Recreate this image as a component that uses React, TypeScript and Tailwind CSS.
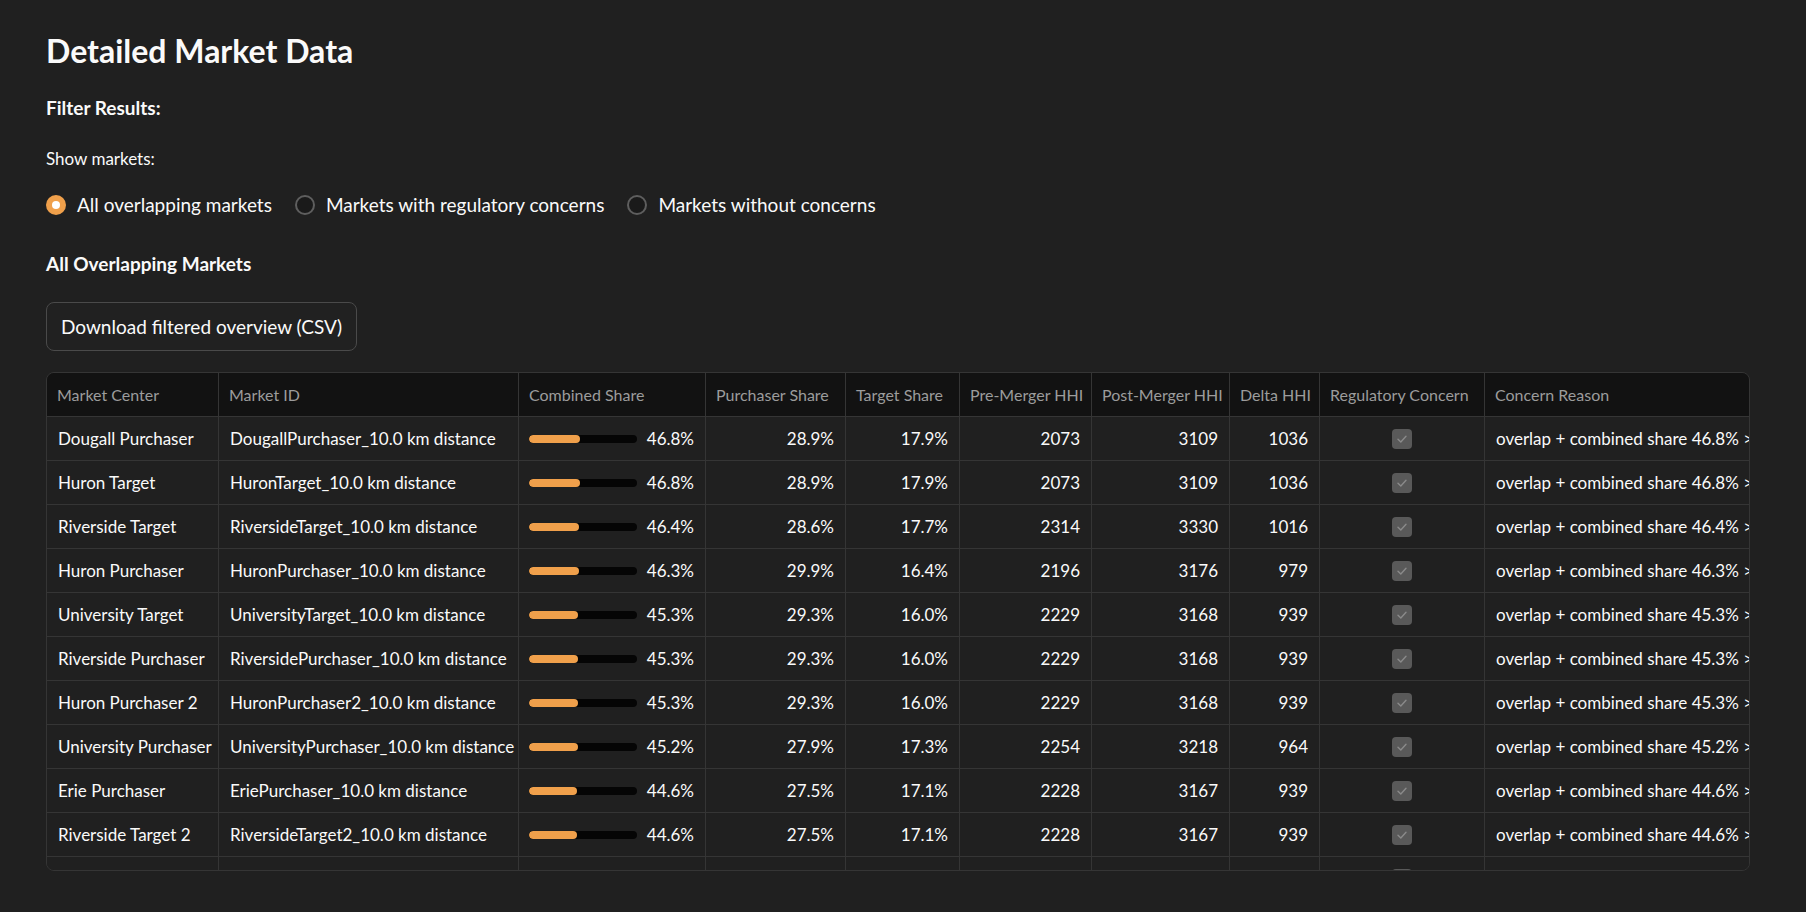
import React from "react";

type Row = {
  center: string;
  id: string;
  combined: number;
  purchaser: number;
  target: number;
  pre: number;
  post: number;
  delta: number;
};

const rows: Row[] = [
  { center: "Dougall Purchaser", id: "DougallPurchaser_10.0 km distance", combined: 46.8, purchaser: 28.9, target: 17.9, pre: 2073, post: 3109, delta: 1036 },
  { center: "Huron Target", id: "HuronTarget_10.0 km distance", combined: 46.8, purchaser: 28.9, target: 17.9, pre: 2073, post: 3109, delta: 1036 },
  { center: "Riverside Target", id: "RiversideTarget_10.0 km distance", combined: 46.4, purchaser: 28.6, target: 17.7, pre: 2314, post: 3330, delta: 1016 },
  { center: "Huron Purchaser", id: "HuronPurchaser_10.0 km distance", combined: 46.3, purchaser: 29.9, target: 16.4, pre: 2196, post: 3176, delta: 979 },
  { center: "University Target", id: "UniversityTarget_10.0 km distance", combined: 45.3, purchaser: 29.3, target: 16.0, pre: 2229, post: 3168, delta: 939 },
  { center: "Riverside Purchaser", id: "RiversidePurchaser_10.0 km distance", combined: 45.3, purchaser: 29.3, target: 16.0, pre: 2229, post: 3168, delta: 939 },
  { center: "Huron Purchaser 2", id: "HuronPurchaser2_10.0 km distance", combined: 45.3, purchaser: 29.3, target: 16.0, pre: 2229, post: 3168, delta: 939 },
  { center: "University Purchaser", id: "UniversityPurchaser_10.0 km distance", combined: 45.2, purchaser: 27.9, target: 17.3, pre: 2254, post: 3218, delta: 964 },
  { center: "Erie Purchaser", id: "EriePurchaser_10.0 km distance", combined: 44.6, purchaser: 27.5, target: 17.1, pre: 2228, post: 3167, delta: 939 },
  { center: "Riverside Target 2", id: "RiversideTarget2_10.0 km distance", combined: 44.6, purchaser: 27.5, target: 17.1, pre: 2228, post: 3167, delta: 939 },
  { center: "University Target 2", id: "UniversityTarget2_10.0 km distance", combined: 44.5, purchaser: 27.4, target: 17.1, pre: 2226, post: 3164, delta: 938 },
];

const headers = [
  "Market Center",
  "Market ID",
  "Combined Share",
  "Purchaser Share",
  "Target Share",
  "Pre-Merger HHI",
  "Post-Merger HHI",
  "Delta HHI",
  "Regulatory Concern",
  "Concern Reason",
];

const widths = [
  "w-[172px]",
  "w-[300px]",
  "w-[187px]",
  "w-[140px]",
  "w-[114px]",
  "w-[132px]",
  "w-[138px]",
  "w-[90px]",
  "w-[165px]",
  "flex-1 min-w-0",
];

const cell = "shrink-0 h-full flex items-center overflow-hidden whitespace-nowrap";

const Radio = ({ label, checked }: { label: string; checked?: boolean }) => (
  <div className="flex items-center gap-[11px]">
    {checked ? (
      <span className="w-[20px] h-[20px] rounded-full bg-[#f0a04b] flex items-center justify-center">
        <span className="w-[8px] h-[8px] rounded-full bg-white" />
      </span>
    ) : (
      <span className="w-[20px] h-[20px] rounded-full border-2 border-[#5e5e5e] bg-[#1a1a1a]" />
    )}
    <span className="text-[19px] leading-[28px] text-[#fafafa]">{label}</span>
  </div>
);

const Checkbox = () => (
  <span className="w-[20px] h-[20px] rounded-[4px] bg-[#595959] flex items-center justify-center">
    <svg width="14" height="14" viewBox="0 0 14 14" fill="none">
      <polyline points="3,7.3 5.8,10 11,4.2" stroke="#8a8a8a" strokeWidth="1.4" strokeLinecap="round" strokeLinejoin="round" />
    </svg>
  </span>
);

const App = () => {
  return (
    <div className="min-h-screen w-full bg-[#202020] font-['Lato',sans-serif] text-[#fafafa] pl-[46px] pt-[29px] pb-10">
      <h2 className="text-[32px] font-bold leading-[44px] h-[44px]">Detailed Market Data</h2>
      <p className="mt-[21px] h-[28px] text-[19px] font-bold leading-[28px]">Filter Results:</p>
      <p className="mt-[25px] h-[24px] text-[17px] leading-[24px]">Show markets:</p>
      <div className="mt-[20px] h-[28px] flex items-center gap-[23px]">
        <Radio label="All overlapping markets" checked />
        <Radio label="Markets with regulatory concerns" />
        <Radio label="Markets without concerns" />
      </div>
      <p className="mt-[31px] h-[28px] text-[19px] font-bold leading-[28px]">All Overlapping Markets</p>
      <button className="mt-[24px] h-[49px] px-[14px] rounded-[8px] border border-[#4a4a4a] bg-[#212121] text-[19px] leading-[28px] text-[#fafafa] flex items-center">
        Download filtered overview (CSV)
      </button>

      <div className="mt-[21px] w-[1704px] h-[499px] border border-[#353535] rounded-[8px] overflow-hidden text-[17px]">
        <div className="flex h-[44px] bg-[#121212] border-b border-[#353535] text-[#9c9c9c] text-[16px]">
          {headers.map((h, i) => (
            <div key={h} className={`${widths[i]} ${cell} px-[10px] ${i < 9 ? "border-r border-[#353535]" : ""}`}>
              {h}
            </div>
          ))}
        </div>
        {rows.map((r) => (
          <div key={r.id} className="flex h-[44px] border-b border-[#353535] bg-[#202020]">
            <div className={`w-[172px] ${cell} px-[11px] border-r border-[#353535]`}>{r.center}</div>
            <div className={`w-[300px] ${cell} px-[11px] border-r border-[#353535]`}>{r.id}</div>
            <div className={`w-[187px] ${cell} pl-[10px] pr-[11px] border-r border-[#353535]`}>
              <div className="w-[108px] h-[8px] rounded-full bg-[#050505] overflow-hidden">
                <div className="h-full rounded-full bg-[#f0a04b]" style={{ width: `${r.combined}%` }} />
              </div>
              <span className="ml-auto">{r.combined.toFixed(1)}%</span>
            </div>
            <div className={`w-[140px] ${cell} px-[11px] justify-end border-r border-[#353535]`}>{r.purchaser.toFixed(1)}%</div>
            <div className={`w-[114px] ${cell} px-[11px] justify-end border-r border-[#353535]`}>{r.target.toFixed(1)}%</div>
            <div className={`w-[132px] ${cell} px-[11px] justify-end border-r border-[#353535]`}>{r.pre}</div>
            <div className={`w-[138px] ${cell} px-[11px] justify-end border-r border-[#353535]`}>{r.post}</div>
            <div className={`w-[90px] ${cell} px-[11px] justify-end border-r border-[#353535]`}>{r.delta}</div>
            <div className={`w-[165px] ${cell} justify-center border-r border-[#353535]`}>
              <Checkbox />
            </div>
            <div className={`flex-1 min-w-0 ${cell} px-[11px]`}>
              overlap + combined share {r.combined.toFixed(1)}% &gt; 30% and ΔHHI &gt; 200
            </div>
          </div>
        ))}
      </div>
    </div>
  );
};

export default App;
